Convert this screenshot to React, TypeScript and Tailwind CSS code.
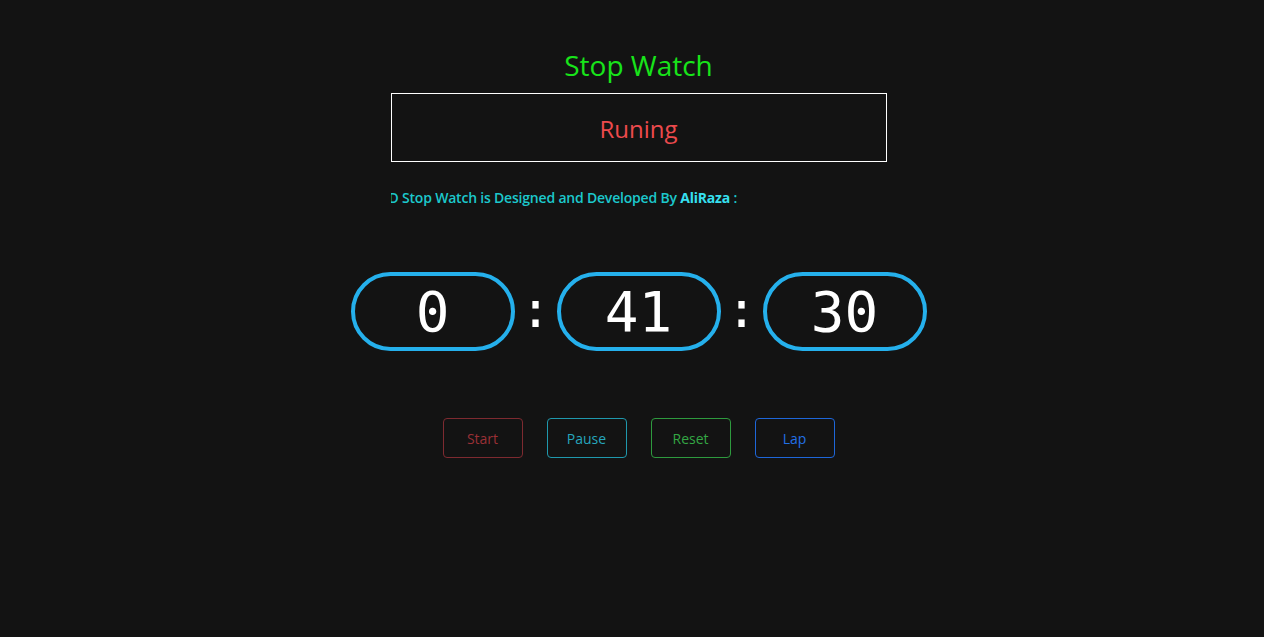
import React from "react";

export default function App() {
  const ui = { fontFamily: '"Open Sans", "Noto Sans", sans-serif' };
  const mono = { fontFamily: '"DejaVu Sans Mono", "Liberation Mono", monospace' };
  const pill =
    "w-[164px] h-[79px] rounded-[40px] border-[4px] border-[#25b0ec] flex items-center justify-center text-white text-[56px] leading-none";
  return (
    <div className="w-full h-[637px] bg-[#131313] flex flex-col items-center pl-[13px]" style={ui}>
      <h1 className="mt-[47px] h-[36px] text-[28px] leading-[36px] text-[#18e41a]">Stop Watch</h1>
      <div className="mt-[10px] w-[496px] h-[69px] border border-white flex items-center justify-center">
        <span className="text-[24px] text-[#ec4a4d] leading-none pt-[2px]">Runing</span>
      </div>
      <div className="mt-[26px] w-[496px] h-[20px] overflow-hidden whitespace-nowrap text-[14px] leading-[20px] font-semibold text-[#1cc8cc] tracking-[-0.2px]">
        <span className="inline-block -ml-[2px]">
          D Stop Watch is Designed and Developed By <b className="font-bold text-[#36e0f0]">AliRaza</b> :
        </span>
      </div>
      <div className="mt-[64px] flex items-center" style={mono}>
        <div className={pill}>0</div>
        <div className="w-[42px] text-center text-white text-[50px] leading-none pb-[4px]">:</div>
        <div className={pill}>41</div>
        <div className="w-[42px] text-center text-white text-[50px] leading-none pb-[4px]">:</div>
        <div className={pill}>30</div>
      </div>
      <div className="mt-[67px] flex gap-[24px]">
        <button className="w-[80px] h-[40px] rounded-[4px] border border-[#7e2a30] text-[#9a3036] text-[14px]">Start</button>
        <button className="w-[80px] h-[40px] rounded-[4px] border border-[#1f98ad] text-[#26a6bd] text-[14px]">Pause</button>
        <button className="w-[80px] h-[40px] rounded-[4px] border border-[#2e9a3e] text-[#33a744] text-[14px]">Reset</button>
        <button className="w-[80px] h-[40px] rounded-[4px] border border-[#1e66d8] text-[#2270e6] text-[14px]">Lap</button>
      </div>
    </div>
  );
}
